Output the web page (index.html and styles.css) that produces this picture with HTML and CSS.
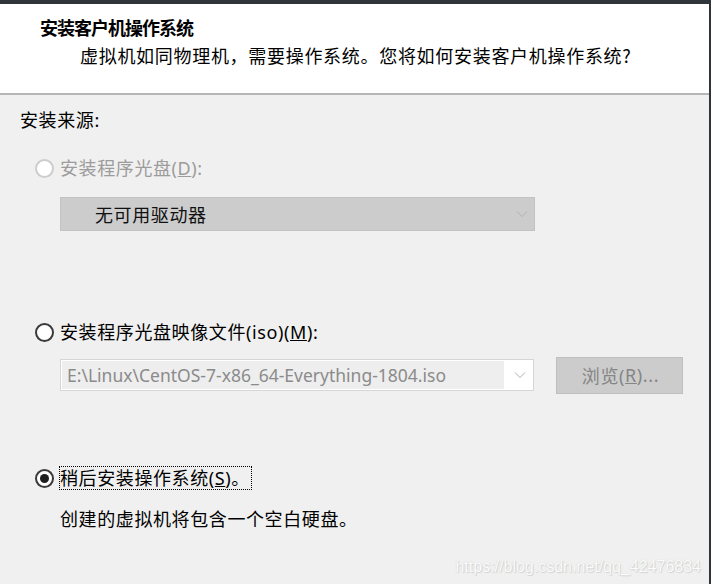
FILE: index.html
```html
<!DOCTYPE html>
<html lang="zh-CN">
<head>
<meta charset="utf-8">
<title>安装客户机操作系统</title>
<link rel="stylesheet" href="styles.css">
</head>
<body>
<div class="window">
  <div class="header">
    <div class="title">安装客户机操作系统</div>
    <div class="subtitle">虚拟机如同物理机，需要操作系统。您将如何安装客户机操作系统?</div>
  </div>
  <div class="content">
    <div class="section-label">安装来源:</div>

    <div class="radio-row row-disc disabled">
      <span class="radio"></span>
      <span class="label">安装程序光盘(<u>D</u>):</span>
    </div>
    <div class="combo combo-disc">
      <span class="combo-text">无可用驱动器</span>
      <svg class="chev" width="12" height="8" viewBox="0 0 12 8"><path d="M1 1.5 L6 6.5 L11 1.5" fill="none" stroke="#b2b2b2" stroke-width="1"/></svg>
    </div>

    <div class="radio-row row-iso">
      <span class="radio"></span>
      <span class="label">安装程序光盘映像文件(iso)(<u>M</u>):</span>
    </div>
    <div class="iso-row">
      <div class="combo combo-iso">
        <span class="iso-field">E:\Linux\CentOS-7-x86_64-Everything-1804.iso</span>
        <svg class="chev" width="12" height="8" viewBox="0 0 12 8"><path d="M1 1.5 L6 6.5 L11 1.5" fill="none" stroke="#b2b2b2" stroke-width="1"/></svg>
      </div>
      <div class="browse">浏览(<u>R</u>)...</div>
    </div>

    <div class="radio-row row-later">
      <span class="radio checked"></span>
      <span class="label focus">稍后安装操作系统(<u>S</u>)。</span>
    </div>
    <div class="desc">创建的虚拟机将包含一个空白硬盘。</div>

    <div class="watermark">https://blog.csdn.net/qq_42476834</div>
  </div>
</div>
</body>
</html>
```
FILE: styles.css
```css
html, body {
  margin: 0;
  padding: 0;
  background: #f0f0f0;
}

body {
  font-family: "Noto Sans", "Noto Sans CJK SC", sans-serif;
  color: #000;
}

.window {
  width: 709px;
  height: 580px;
  border-top: 4px solid #2f353b;
  border-right: 2px solid #2f353b;
  display: flex;
  flex-direction: column;
  overflow: hidden;
}

.header {
  background: #fff;
  height: 78px;
  padding: 11px 0 0 40px;
  border-bottom: 2px solid #b6b6b6;
  flex: none;
}

.title {
  font-family: "Noto Sans CJK SC", sans-serif;
  font-weight: bold;
  font-size: 18px;
  letter-spacing: -1px;
  line-height: 24px;
  height: 24px;
}

.subtitle {
  font-family: "Noto Sans CJK SC", sans-serif;
  font-size: 18px;
  letter-spacing: 0.7px;
  line-height: 24px;
  margin: 4px 0 0 40px;
  white-space: nowrap;
}

.content {
  position: relative;
  flex: 1;
  background: #f0f0f0;
  padding: 13px 0 0 20px;
  font-size: 18px;
  letter-spacing: 0.6px;
}

.section-label {
  line-height: 24px;
  height: 24px;
}

.radio-row {
  display: flex;
  align-items: center;
  height: 24px;
  margin-left: 15px;
}

.row-disc { margin-top: 24px; }
.row-iso { margin-top: 89px; }
.row-later { margin-top: 72px; }

.radio {
  box-sizing: border-box;
  width: 19px;
  height: 19px;
  border-radius: 50%;
  border: 2px solid #3a3a3a;
  background: #fff;
  flex: none;
  display: flex;
  align-items: center;
  justify-content: center;
}

.disabled .radio {
  border-color: #cdcdcd;
}

.radio.checked::after {
  content: "";
  width: 9px;
  height: 9px;
  border-radius: 50%;
  background: #1e1e1e;
}

.label {
  margin-left: 6px;
  line-height: 24px;
  white-space: nowrap;
}

.disabled .label {
  color: #9c9c9c;
}

.label.focus {
  margin-left: 5px;
  padding: 0 2px 0 1px;
  outline: 1px dotted #000;
  outline-offset: -1px;
}

.combo {
  box-sizing: border-box;
  display: flex;
  align-items: center;
  position: relative;
  white-space: nowrap;
}

.combo-disc {
  width: 475px;
  height: 34px;
  margin: 17px 0 0 40px;
  background: #cccccc;
  border: 1px solid #c3c3c3;
  padding-left: 34px;
}

.combo-text {
  flex: 1;
  color: #111;
}

.chev {
  flex: none;
  margin-right: 6px;
}

.iso-row {
  display: flex;
  align-items: center;
  height: 38px;
  margin: 12px 0 0 40px;
  gap: 22px;
}

.combo-iso {
  width: 474px;
  height: 32px;
  background: #fff;
  border: 1px solid #d6d6d6;
  padding: 1px;
}

.iso-field {
  box-sizing: border-box;
  height: 100%;
  width: 443px;
  background: #eeeeee;
  color: #8b8b8b;
  font-size: 17.5px;
  letter-spacing: 0;
  line-height: 28px;
  padding-left: 5px;
  margin-right: 10px;
}

.browse {
  box-sizing: border-box;
  width: 127px;
  height: 37px;
  background: #cccccc;
  border: 1px solid #bfbfbf;
  color: #858585;
  display: flex;
  align-items: center;
  justify-content: center;
  padding-left: 2px;
}

.desc {
  margin: 17px 0 0 40px;
  line-height: 24px;
}

.watermark {
  position: absolute;
  right: 8px;
  bottom: 8px;
  font-family: "Liberation Sans", Arial, sans-serif;
  font-size: 16px;
  letter-spacing: 0;
  color: #fbfbfb;
  text-shadow: 0 0 1px #c9c9c9, 1px 1px 1px #d4d4d4;
}
```
